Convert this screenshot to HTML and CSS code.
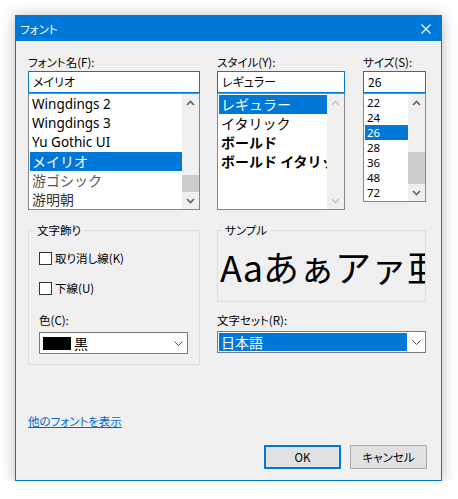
FILE: index.html
```html
<!DOCTYPE html>
<html lang="ja">
<head>
<meta charset="utf-8">
<title>フォント</title>
<link rel="stylesheet" href="styles.css">
</head>
<body>
<div class="window">
  <div class="titlebar">
    <span class="title">フォント</span>
    <svg class="close" width="10" height="10" viewBox="0 0 10 10"><path d="M0.5 0.5L9.5 9.5M9.5 0.5L0.5 9.5" stroke="#fff" stroke-width="1.1" fill="none"/></svg>
  </div>
  <div class="content">
    <div class="top-row">
      <div class="col col-name">
        <div class="lbl">フォント名(F):</div>
        <div class="input">メイリオ</div>
        <div class="list list-name">
          <ul class="items">
            <li class="latin">Wingdings 2</li>
            <li class="latin">Wingdings 3</li>
            <li class="latin">Yu Gothic UI</li>
            <li class="sel">メイリオ</li>
            <li class="dim">游ゴシック</li>
            <li class="dim2">游明朝</li>
          </ul>
          <div class="scrollbar">
            <div class="sb-btn"><svg width="9" height="6" viewBox="0 0 9 6"><path d="M1 5L4.5 1.5L8 5" fill="none" stroke="#606060" stroke-width="1.6"/></svg></div>
            <div class="sb-track"><div class="sb-thumb"></div></div>
            <div class="sb-btn"><svg width="9" height="6" viewBox="0 0 9 6"><path d="M1 1L4.5 4.5L8 1" fill="none" stroke="#606060" stroke-width="1.6"/></svg></div>
          </div>
        </div>
      </div>
      <div class="col col-style">
        <div class="lbl">スタイル(Y):</div>
        <div class="input">レギュラー</div>
        <div class="list list-style">
          <ul class="items">
            <li class="sel">レギュラー</li>
            <li>イタリック</li>
            <li class="bold">ボールド</li>
            <li class="bold">ボールド イタリック</li>
          </ul>
          <div class="scrollbar disabled">
            <div class="sb-btn"><svg width="9" height="6" viewBox="0 0 9 6"><path d="M1 5L4.5 1.5L8 5" fill="none" stroke="#c4c4c4" stroke-width="1.6"/></svg></div>
            <div class="sb-track"></div>
            <div class="sb-btn"><svg width="9" height="6" viewBox="0 0 9 6"><path d="M1 1L4.5 4.5L8 1" fill="none" stroke="#c4c4c4" stroke-width="1.6"/></svg></div>
          </div>
        </div>
      </div>
      <div class="col col-size">
        <div class="lbl">サイズ(S):</div>
        <div class="input">26</div>
        <div class="list list-size">
          <ul class="items items-size">
            <li>22</li>
            <li>24</li>
            <li class="sel">26</li>
            <li>28</li>
            <li>36</li>
            <li>48</li>
            <li>72</li>
          </ul>
          <div class="scrollbar">
            <div class="sb-btn"><svg width="9" height="6" viewBox="0 0 9 6"><path d="M1 5L4.5 1.5L8 5" fill="none" stroke="#606060" stroke-width="1.6"/></svg></div>
            <div class="sb-track"><div class="sb-thumb"></div></div>
            <div class="sb-btn"><svg width="9" height="6" viewBox="0 0 9 6"><path d="M1 1L4.5 4.5L8 1" fill="none" stroke="#606060" stroke-width="1.6"/></svg></div>
          </div>
        </div>
      </div>
    </div>

    <div class="mid-row">
      <fieldset class="group group-deco">
        <legend>文字飾り</legend>
        <div class="check-row"><span class="box"></span><span>取り消し線(K)</span></div>
        <div class="check-row"><span class="box"></span><span>下線(U)</span></div>
        <div class="color-lbl">色(C):</div>
        <div class="combo combo-color">
          <span class="swatch"></span>
          <span class="combo-text">黒</span>
          <svg class="chev" width="9" height="5" viewBox="0 0 9 5"><path d="M0.5 0.5L4.5 4.5L8.5 0.5" fill="none" stroke="#555" stroke-width="1"/></svg>
        </div>
      </fieldset>
      <div class="right-col">
        <fieldset class="group group-sample">
          <legend>サンプル</legend>
          <div class="sample">Aaあぁアァ亜</div>
        </fieldset>
        <div class="charset-lbl">文字セット(R):</div>
        <div class="combo combo-charset">
          <span class="combo-val">日本語</span>
          <span class="drop"><svg width="9" height="5" viewBox="0 0 9 5"><path d="M0.5 0.5L4.5 4.5L8.5 0.5" fill="none" stroke="#555" stroke-width="1"/></svg></span>
        </div>
      </div>
    </div>

    <div class="link-row"><a class="more" href="#">他のフォントを表示</a></div>

    <div class="buttons">
      <button class="btn btn-ok">OK</button>
      <button class="btn">キャンセル</button>
    </div>
  </div>
</div>
</body>
</html>
```
FILE: styles.css
```css
body {
  margin: 0;
  background: #fff;
  font-family: "Noto Sans CJK JP", sans-serif;
  font-size: 12px;
  color: #000;
}

.window {
  box-sizing: border-box;
  width: 427px;
  height: 466px;
  margin: 15px 0 0 15px;
  border: 1px solid #0078d7;
  background: #f0f0f0;
  box-shadow: 0 1px 14px rgba(0, 0, 0, 0.28);
  display: flex;
  flex-direction: column;
}

.titlebar {
  height: 25px;
  flex: none;
  background: #0078d7;
  color: #fff;
  display: flex;
  align-items: center;
  justify-content: space-between;
  padding: 0 10px 0 4px;
}

.title {
  font-size: 11.5px;
  line-height: 16px;
  font-feature-settings: "palt";
}

.close {
  display: block;
}

.content {
  padding: 13px 15px 0 12px;
  font-size: 11.5px;
  font-feature-settings: "palt";
}

.top-row {
  display: flex;
}

.col-name { width: 172px; }
.col-style { width: 128px; margin-left: 17px; }
.col-size { width: 63px; margin-left: 18px; }

.lbl {
  height: 17px;
  line-height: 17px;
}

.input {
  box-sizing: border-box;
  height: 22px;
  border: 1px solid #0078d7;
  background: #fff;
  padding-left: 4px;
  font-size: 12px;
  line-height: 20px;
  white-space: nowrap;
  overflow: hidden;
}

.list {
  box-sizing: border-box;
  border: 1px solid #828790;
  background: #fff;
  display: flex;
}

.list-name, .list-style { height: 117px; }
.list-size { height: 109px; }

.items {
  flex: 1;
  min-width: 0;
  list-style: none;
  margin: 0;
  padding: 1px 0 0 1px;
  overflow: hidden;
  font-feature-settings: normal;
  font-size: 14px;
}

.items li {
  height: 19px;
  line-height: 19px;
  padding-left: 2px;
  white-space: nowrap;
  overflow: hidden;
}

.items .latin {
  font-family: "Noto Sans", "Noto Sans CJK JP", sans-serif;
  font-size: 13.5px;
}

.items .dim { color: #555; }
.items .dim2 { color: #333; }
.items .bold { font-weight: bold; }

.items .sel {
  background: #0078d7;
  color: #fff;
}

.items-size li {
  height: 15px;
  line-height: 15px;
  font-size: 11.5px;
  font-family: "Noto Sans", sans-serif;
}

.scrollbar {
  width: 17px;
  flex: none;
  background: #f0f0f0;
  display: flex;
  flex-direction: column;
}

.sb-btn {
  height: 17px;
  flex: none;
  display: flex;
  align-items: center;
  justify-content: center;
}

.sb-btn svg { display: block; }

.sb-track {
  flex: 1;
  display: flex;
  flex-direction: column;
  justify-content: flex-end;
}

.sb-thumb {
  height: 17px;
  background: #cdcdcd;
}

.list-size .sb-thumb { height: 32px; }

.mid-row {
  display: flex;
  align-items: flex-start;
  margin-top: 12px;
}

.group {
  margin: 0;
  min-width: 0;
  border: 1px solid #dcdcdc;
}

.group legend {
  padding: 0 3px;
  line-height: 16px;
}

.group-deco {
  box-sizing: border-box;
  width: 172px;
  padding: 12px 10px 10px;
}

.group-deco legend { margin-left: -5px; }

.check-row {
  display: flex;
  align-items: center;
  height: 17px;
  line-height: 17px;
}

.check-row + .check-row { margin-top: 13px; }

.box {
  box-sizing: border-box;
  width: 13px;
  height: 13px;
  border: 1px solid #333;
  background: #fff;
  margin-right: 3px;
  flex: none;
}

.color-lbl {
  margin-top: 15px;
  line-height: 16px;
}

.combo {
  box-sizing: border-box;
  height: 22px;
  border: 1px solid #7a7a7a;
  background: #fff;
  display: flex;
  align-items: center;
}

.combo-color {
  width: 149px;
  margin-top: 4px;
  padding: 0 4px 0 3px;
}

.swatch {
  width: 28px;
  height: 13px;
  background: #000;
  margin-right: 3px;
  flex: none;
}

.combo-text {
  flex: 1;
  font-size: 14px;
  line-height: 18px;
  font-feature-settings: normal;
}

.chev { display: block; }

.right-col {
  width: 209px;
  margin-left: 17px;
}

.group-sample {
  box-sizing: border-box;
  width: 209px;
  padding: 0 0 0 2px;
}

.group-sample legend { margin-left: 2px; }

.sample {
  height: 63px;
  line-height: 57px;
  font-size: 36px;
  white-space: nowrap;
  overflow: hidden;
  font-feature-settings: normal;
}

.charset-lbl {
  margin-top: 10px;
  line-height: 16px;
}

.combo-charset {
  width: 209px;
  margin-top: 3px;
  padding: 1px 0 1px 1px;
  align-items: stretch;
}

.combo-val {
  flex: 1;
  background: #0078d7;
  color: #fff;
  padding-left: 2px;
  font-size: 14px;
  line-height: 18px;
  font-feature-settings: normal;
}

.drop {
  width: 18px;
  display: flex;
  align-items: center;
  justify-content: center;
}

.drop svg { display: block; }

.link-row {
  margin-top: 48px;
  line-height: 16px;
}

.more {
  color: #0066cc;
  text-decoration: underline;
}

.buttons {
  display: flex;
  justify-content: flex-end;
  gap: 9px;
  margin-top: 16px;
  margin-right: -1px;
}

.btn {
  box-sizing: border-box;
  width: 77px;
  height: 24px;
  padding: 0;
  margin: 0;
  background: #e1e1e1;
  border: 1px solid #adadad;
  font-family: "Noto Sans CJK JP", sans-serif;
  font-size: 11.5px;
  font-feature-settings: "palt";
  color: #000;
  line-height: 16px;
}

.btn-ok {
  border: 2px solid #0078d7;
}
```
